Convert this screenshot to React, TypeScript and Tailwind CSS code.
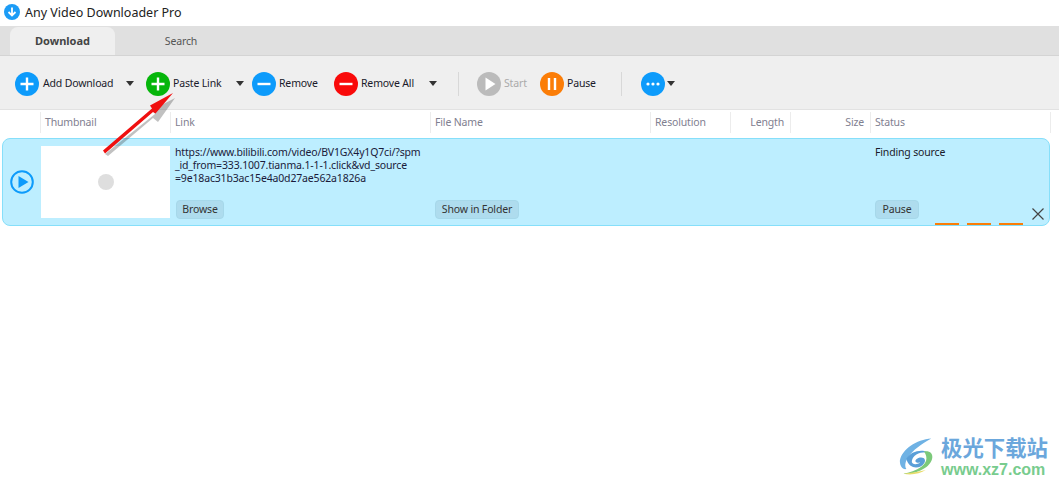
import React from "react";

const font = { fontFamily: '"Noto Sans", sans-serif' };

function Circle({ color, children }: { color: string; children: React.ReactNode }) {
  return (
    <svg width="24" height="24" viewBox="0 0 24 24" className="shrink-0">
      <circle cx="12" cy="12" r="12" fill={color} />
      {children}
    </svg>
  );
}
const Plus = () => (
  <path d="M12 5.5V18.5M5.5 12H18.5" stroke="#fff" strokeWidth="2.4" fill="none" />
);
const Minus = () => <path d="M5.5 12H18.5" stroke="#fff" strokeWidth="2.4" fill="none" />;
const Caret = () => (
  <svg width="8" height="5" viewBox="0 0 8 5" className="shrink-0">
    <path d="M0 0H8L4 5Z" fill="#333" />
  </svg>
);
const Sep = () => <div className="w-px h-6 bg-[#d8d8d8] shrink-0" />;

function Head({ w, label, right }: { w: string; label?: string; right?: boolean }) {
  return (
    <div className={`${w} shrink-0 h-full border-r border-[#ececec] flex items-center ${right ? "justify-end pr-[6px]" : "px-1"}`}>
      {label}
    </div>
  );
}

export default function App() {
  return (
    <div className="relative w-[1059px] h-[486px] bg-white overflow-hidden text-[10.5px] tracking-[-0.16px] text-[#1a1a2a]" style={font}>
      <div className="h-[26px] flex items-center pl-1 gap-[5px]">
        <svg width="16" height="16" viewBox="0 0 16 16" className="-mt-[2px]">
          <circle cx="8" cy="8" r="8" fill="#1c9cf6" />
          <path d="M8 3.5V11.5M4.5 8L8 11.5L11.5 8" stroke="#fff" strokeWidth="1.8" fill="none" />
        </svg>
        <span className="text-[12.5px] tracking-normal text-[#222]">Any Video Downloader Pro</span>
      </div>

      <div className="h-[30px] bg-[#e0e0e0] border-b border-[#d4d4d4] pl-[10px] flex items-end">
        <div className="w-[105px] h-[28px] pt-px bg-[#efefef] rounded-t-lg flex items-center justify-center font-bold text-[11px] tracking-normal text-[#444]">
          Download
        </div>
        <div className="w-[132px] h-[28px] pt-px flex items-center justify-center text-[#555]">Search</div>
      </div>

      <div className="h-[54px] pt-[2px] bg-[#efefef] border-b border-[#e2e2e2] flex items-center pl-[15px]">
        <Circle color="#0d9bfb"><Plus /></Circle>
        <span className="ml-1 w-[83px]">Add Download</span>
        <Caret />
        <div className="ml-3"><Circle color="#06b60b"><Plus /></Circle></div>
        <span className="ml-[3px] w-[63px]">Paste Link</span>
        <Caret />
        <div className="ml-2"><Circle color="#0d9bfb"><Minus /></Circle></div>
        <span className="ml-[3px] w-[55px]">Remove</span>
        <Circle color="#f90a0a"><Minus /></Circle>
        <span className="ml-[3px] w-[68px]">Remove All</span>
        <Caret />
        <div className="ml-[21px]"><Sep /></div>
        <div className="ml-[18px]">
          <Circle color="#bbbbbb"><path d="M8.5 5.5L18.5 12L8.5 18.5Z" fill="#fff" /></Circle>
        </div>
        <span className="ml-[3px] w-[36px] text-[#aaa]">Start</span>
        <Circle color="#fb7d07"><path d="M9 6V18M15 6V18" stroke="#fff" strokeWidth="2.4" /></Circle>
        <span className="ml-[3px] w-[54px]">Pause</span>
        <div className="mr-[19px]"><Sep /></div>
        <Circle color="#0d9bfb">
          <circle cx="7" cy="12" r="1.6" fill="#fff" />
          <circle cx="12" cy="12" r="1.6" fill="#fff" />
          <circle cx="17" cy="12" r="1.6" fill="#fff" />
        </Circle>
        <div className="ml-[2px]"><Caret /></div>
      </div>

      <div className="h-[21px] mt-[2px] flex items-center text-[#7f8090]">
        <Head w="w-[41px]" />
        <Head w="w-[130px]" label="Thumbnail" />
        <Head w="w-[260px]" label="Link" />
        <Head w="w-[220px]" label="File Name" />
        <Head w="w-[80px]" label="Resolution" />
        <Head w="w-[60px]" label="Length" right />
        <Head w="w-[80px]" label="Size" right />
        <Head w="w-[180px]" label="Status" />
      </div>

      <div className="mx-[2px] mt-[5px] w-[1048px] h-[88px] bg-[#bdeeff] border border-[#86dffa] rounded-lg flex relative">
        <div className="w-[38px] shrink-0 flex items-center justify-center">
          <svg width="24" height="24" viewBox="0 0 24 24" className="-ml-[1px]">
            <circle cx="12" cy="12" r="10.8" fill="none" stroke="#0d9bfb" strokeWidth="2" />
            <path d="M8.5 6L18.5 12L8.5 18Z" fill="#0d9bfb" />
          </svg>
        </div>
        <div className="w-[129px] h-[72px] mt-[7px] shrink-0 bg-white flex items-center justify-center">
          <div className="w-4 h-4 rounded-full bg-[#dedede]" />
        </div>
        <div className="w-[260px] shrink-0 pl-[5px] flex flex-col">
          <div className="mt-[7px] leading-[13px] h-[39px] whitespace-nowrap text-[#1a1a3a]">
            https://www.bilibili.com/video/BV1GX4y1Q7ci/?spm
            <br />
            _id_from=333.1007.tianma.1-1-1.click&amp;vd_source
            <br />
            =9e18ac31b3ac15e4a0d27ae562a1826a
          </div>
          <button className="ml-px mt-[15px] w-12 h-[19px] rounded-sm bg-[#aedcee] border border-[#a6d8ea] text-[#333] text-[10.5px]">Browse</button>
        </div>
        <div className="w-[440px] shrink-0 pl-[5px] flex flex-col justify-end pb-[6px]">
          <button className="w-[84px] h-[19px] rounded-sm bg-[#aedcee] border border-[#a6d8ea] text-[#333] text-[10.5px]">Show in Folder</button>
        </div>
        <div className="flex-1 pl-[5px] flex flex-col">
          <div className="mt-[7px] leading-[13px]">Finding source</div>
          <button className="mt-[41px] w-11 h-[19px] rounded-sm bg-[#aedcee] border border-[#a6d8ea] text-[#333] text-[10.5px]">Pause</button>
        </div>
        <div className="absolute left-[932px] bottom-0 flex gap-2">
          <div className="w-6 h-[2px] bg-[#fb7d07]" />
          <div className="w-6 h-[2px] bg-[#fb7d07]" />
          <div className="w-6 h-[2px] bg-[#fb7d07]" />
        </div>
        <svg width="14" height="14" viewBox="0 0 14 14" className="absolute right-[4px] bottom-[4px]">
          <path d="M1.5 1.5L12.5 12.5M12.5 1.5L1.5 12.5" stroke="#444" strokeWidth="1.2" />
        </svg>
      </div>

      <svg width="90" height="70" viewBox="0 0 90 70" className="absolute left-[95px] top-[90px]">
        <path d="M10 64L13 66L58 28L63 32L80 8L57 20L60 24Z" fill="#333" fillOpacity="0.3" />
        <path d="M8 60.5L10 63.5L58 22L60.5 23.5L78 3L55 15.5L57 18.5Z" fill="#f01010" />
      </svg>

      <div className="absolute left-[898px] top-[435px] w-[155px] h-[44px]">
        <svg width="50" height="44" viewBox="0 0 54 44" className="absolute left-0 top-0">
          <path d="M36 2C20 3 4 14 2 26C2 32 5 36 9 35C5 28 12 15 36 2Z" fill="#6fb2e4" />
          <path d="M9 24C13 16 26 13 32 17C24 16 16 20 15 26C14 30 20 31 24 28C18 29 17 25 22 23C28 21 31 25 28 29C24 35 12 36 9 24Z" fill="#5a9fd8" />
          <path d="M28 16C40 14 40 27 29 34C22 39 12 41 6 40C18 38 38 30 28 16Z" fill="#7cc97a" />
          <path d="M6 40C14 42 24 40 30 36C22 38 14 39 6 40Z" fill="#e8dc6a" />
        </svg>
        <div className="absolute left-[43px] top-0 text-[21.4px] leading-[24px] tracking-normal font-bold text-[#6ba7dc] whitespace-nowrap" style={{ fontFamily: '"Noto Sans CJK SC", sans-serif' }}>极光下载站</div>
        <div className="absolute left-[43px] top-[26px] text-[16px] leading-[18px] tracking-normal font-bold text-[#78cc8e] whitespace-nowrap" style={{ fontFamily: '"Liberation Sans", sans-serif' }}>www.xz7.com</div>
      </div>
    </div>
  );
}
